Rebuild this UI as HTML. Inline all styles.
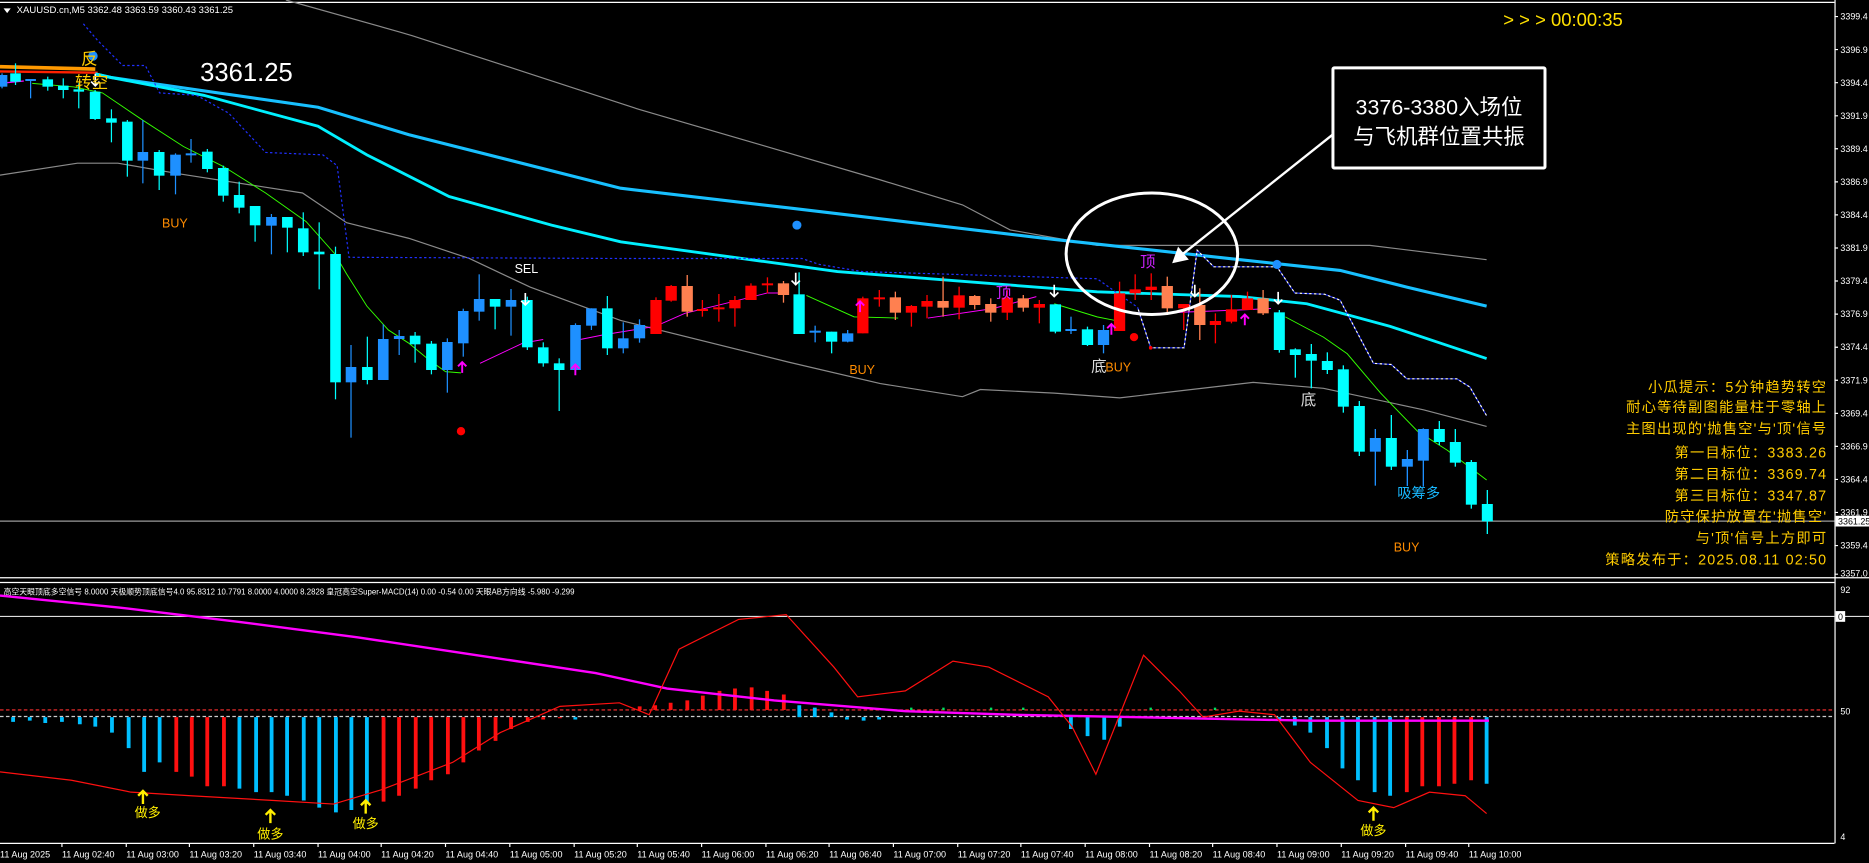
<!DOCTYPE html>
<html><head><meta charset="utf-8">
<style>
html,body{margin:0;padding:0;background:#000;width:1869px;height:863px;overflow:hidden}
svg{display:block;font-family:"Liberation Sans","Noto Sans CJK SC","WenQuanYi Zen Hei",sans-serif}
</style></head><body>
<svg width="1869" height="863" viewBox="0 0 1869 863" xmlns="http://www.w3.org/2000/svg">
<rect width="1869" height="863" fill="#000"/>

<!-- ========== display-coordinate group ========== -->
<g transform="scale(1.1912)">
  <!-- frame -->
  <line x1="0" y1="2" x2="1540" y2="2" stroke="#fff" stroke-width="1"/>
  <line x1="1540.5" y1="0" x2="1540.5" y2="708" stroke="#fff" stroke-width="1"/>
  <line x1="0" y1="485" x2="1569" y2="485" stroke="#fff" stroke-width="1"/>
  <line x1="0" y1="489" x2="1540" y2="489" stroke="#fff" stroke-width="1"/>
  <line x1="0" y1="708" x2="1540" y2="708" stroke="#fff" stroke-width="1"/>

  <!-- bands -->
  <polyline fill="none" stroke="#8a8a8a" stroke-width="1" points="240,0 336,27 346,30 442,61 537,92 640,122 739,151 808,172 848,193 921,206 1091,206 1150,206 1248,218"/>
  <polyline fill="none" stroke="#8a8a8a" stroke-width="1" points="0,147 65,137 99,137 151,146 254,162 291,187 343,200 394,217 445,241 521,269 662,304 739,322 808,333 823,327 885,330 940,334 1052,321 1111,326 1195,344 1248,358"/>

  <!-- left orange/red -->
  <line x1="0" y1="56" x2="80" y2="58" stroke="#ff9900" stroke-width="3"/>
  <line x1="0" y1="60" x2="82" y2="61" stroke="#ff2000" stroke-width="2"/>

  <!-- cyan thick -->
  <polyline fill="none" stroke="#18c0ff" stroke-width="2.6" points="80,62 93,65 267,90 343,113 521,158 666,175 885,201 1041,218 1125,227 1181,241 1248,257"/>
  <polyline fill="none" stroke="#00f0ff" stroke-width="2.4" points="80,62 93,65 171,80 267,106 308,130 377,165 463,189 521,203 703,228 921,245 1041,249 1097,255 1167,274 1248,301"/>

  <!-- stepped dotted line -->
  <polyline fill="none" stroke="#2030ff" stroke-width="1" stroke-dasharray="2,2" points="70,20 82,34 103,55 122,55 134,78 165,80 192,95 223,128 271,130 283,139 293,216 521,217 673,217 688,222 724,228 921,234 955,258 966,292 994,292 1005,210 1019,224 1072,224 1087,246 1112,247 1125,252 1153,305 1168,306 1181,318 1223,318 1234,325 1248,349"/>
  <polyline fill="none" stroke="#fff" stroke-width="1" stroke-dasharray="2,2" stroke-dashoffset="2" points="955,258 966,292 994,292 1005,210 1019,224 1072,224 1087,246 1112,247 1125,252 1153,305 1168,306 1181,318 1223,318 1234,325 1248,349"/>

  <!-- green / magenta MAs -->
  <polyline fill="none" stroke="#ff00ff" stroke-width="1" points="0,70 20,68"/>
  <polyline fill="none" stroke="#33ff00" stroke-width="0.8" points="27,70 62,73 86,78 120,101 154,123 188,140 223,162 257,186 281,213 291,230 308,257 326,277 343,288 360,302 374,312 387,313"/>
  <polyline fill="none" stroke="#ff00ff" stroke-width="0.8" points="403,305 439,288 456,285"/>
  <polyline fill="none" stroke="#ff00ff" stroke-width="0.8" points="487,285 507,281 550,274 575,263 612,254 644,246 655,246"/>
  <polyline fill="none" stroke="#33ff00" stroke-width="0.8" points="677,248 717,266 754,267"/>
  <polyline fill="none" stroke="#ff00ff" stroke-width="0.8" points="779,267 834,259 870,249"/>
  <polyline fill="none" stroke="#33ff00" stroke-width="0.8" points="885,255 921,266 936,269"/>
  <polyline fill="none" stroke="#ff00ff" stroke-width="0.8" points="954,264 994,262 1045,260 1067,259"/>
  <polyline fill="none" stroke="#33ff00" stroke-width="0.8" points="1079,266 1111,283 1131,297 1159,330 1190,362 1215,378 1248,403"/>

  <!-- current price line -->
  <line x1="0" y1="437.5" x2="1540" y2="437.5" stroke="#9a9a9a" stroke-width="1"/>
</g>

<!-- ========== candles (zoom coordinate groups) ========== -->
<g transform="translate(0,40) scale(0.40816,0.33333)">
 <g fill="#1e90ff">
  <rect x="3.5" y="100" width="3" height="45"/><rect x="-8" y="105" width="26" height="35"/>
  <rect x="73.5" y="118" width="3" height="57"/><rect x="62" y="117" width="26" height="6"/>
  <rect x="348.5" y="240" width="3" height="190"/><rect x="337" y="336" width="26" height="26"/>
  <rect x="428.5" y="340" width="3" height="123"/><rect x="417" y="344" width="26" height="63"/>
  <rect x="466.5" y="297" width="3" height="71"/><rect x="455" y="340" width="26" height="6"/>
  <rect x="663.5" y="522" width="3" height="121"/><rect x="652" y="531" width="26" height="26"/>
  <rect x="858.5" y="915" width="3" height="278"/><rect x="847" y="981" width="26" height="46"/>
  <rect x="937.5" y="853" width="3" height="167"/><rect x="926" y="897" width="26" height="123"/>
  <rect x="976.5" y="870" width="3" height="75"/><rect x="965" y="888" width="26" height="9"/>
  <rect x="1094.5" y="895" width="3" height="163"/><rect x="1083" y="906" width="26" height="84"/>
  <rect x="1133.5" y="806" width="3" height="144"/><rect x="1122" y="813" width="26" height="97"/>
  <rect x="1172.5" y="703" width="3" height="139"/><rect x="1161" y="777" width="26" height="38"/>
  <rect x="1250.5" y="747" width="3" height="140"/><rect x="1239" y="780" width="26" height="20"/>
  <rect x="1408.5" y="850" width="3" height="145"/><rect x="1397" y="855" width="26" height="135"/>
  <rect x="1447.5" y="805" width="3" height="65"/><rect x="1436" y="805" width="26" height="52"/>
  <rect x="1525.5" y="847" width="3" height="93"/><rect x="1514" y="895" width="26" height="30"/>
 </g>
 <g fill="#00ffff">
  <rect x="36.5" y="70" width="3" height="65"/><rect x="25" y="100" width="26" height="25"/>
  <rect x="115.5" y="110" width="3" height="42"/><rect x="104" y="118" width="26" height="22"/>
  <rect x="153.5" y="115" width="3" height="60"/><rect x="142" y="137" width="26" height="13"/>
  <rect x="191.5" y="130" width="3" height="75"/><rect x="180" y="148" width="26" height="7"/>
  <rect x="231.5" y="150" width="3" height="90"/><rect x="220" y="155" width="26" height="82"/>
  <rect x="271.5" y="208" width="3" height="99"/><rect x="260" y="235" width="26" height="13"/>
  <rect x="310.5" y="240" width="3" height="170"/><rect x="299" y="245" width="26" height="117"/>
  <rect x="388.5" y="330" width="3" height="120"/><rect x="377" y="336" width="26" height="71"/>
  <rect x="506.5" y="327" width="3" height="70"/><rect x="495" y="335" width="26" height="52"/>
  <rect x="545.5" y="377" width="3" height="108"/><rect x="534" y="384" width="26" height="83"/>
  <rect x="584.5" y="425" width="3" height="95"/><rect x="573" y="465" width="26" height="38"/>
  <rect x="623.5" y="498" width="3" height="107"/><rect x="612" y="498" width="26" height="58"/>
  <rect x="702.5" y="531" width="3" height="106"/><rect x="691" y="531" width="26" height="32"/>
  <rect x="741.5" y="517" width="3" height="131"/><rect x="730" y="565" width="26" height="72"/>
  <rect x="780.5" y="547" width="3" height="201"/><rect x="769" y="635" width="26" height="8"/>
  <rect x="820.5" y="620" width="3" height="458"/><rect x="809" y="642" width="26" height="385"/>
  <rect x="898.5" y="890" width="3" height="143"/><rect x="887" y="981" width="26" height="39"/>
  <rect x="1015.5" y="876" width="3" height="92"/><rect x="1004" y="887" width="26" height="26"/>
  <rect x="1055.5" y="903" width="3" height="100"/><rect x="1044" y="911" width="26" height="79"/>
  <rect x="1211.5" y="777" width="3" height="91"/><rect x="1200" y="777" width="26" height="23"/>
  <rect x="1290.5" y="770" width="3" height="160"/><rect x="1279" y="780" width="26" height="142"/>
  <rect x="1329.5" y="907" width="3" height="73"/><rect x="1318" y="922" width="26" height="48"/>
  <rect x="1368.5" y="955" width="3" height="158"/><rect x="1357" y="970" width="26" height="20"/>
  <rect x="1486.5" y="768" width="3" height="177"/><rect x="1475" y="805" width="26" height="120"/>
 </g>
</g>

<g transform="translate(620,180) scale(0.43365,0.33333)">
 <g fill="#1e90ff">
  <rect x="43.5" y="418" width="3" height="70"/><rect x="32" y="435" width="26" height="40"/>
  <rect x="448.5" y="437" width="3" height="50"/><rect x="437" y="452" width="26" height="6"/>
  <rect x="523.5" y="450" width="3" height="37"/><rect x="512" y="460" width="26" height="25"/>
  <rect x="1038.5" y="410" width="3" height="52"/><rect x="1027" y="447" width="26" height="6"/>
  <rect x="1113.5" y="435" width="3" height="85"/><rect x="1102" y="450" width="26" height="45"/>
 </g>
 <g fill="#00ffff">
  <rect x="411.5" y="277" width="3" height="185"/><rect x="400" y="343" width="26" height="119"/>
  <rect x="486.5" y="455" width="3" height="65"/><rect x="475" y="455" width="26" height="30"/>
  <rect x="1002.5" y="373" width="3" height="87"/><rect x="991" y="373" width="26" height="82"/>
  <rect x="1076.5" y="440" width="3" height="58"/><rect x="1065" y="448" width="26" height="47"/>
 </g>
 <g fill="#ff0000">
  <rect x="81.5" y="352" width="3" height="110"/><rect x="70" y="360" width="26" height="102"/>
  <rect x="116.5" y="315" width="3" height="50"/><rect x="105" y="318" width="26" height="44"/>
  <rect x="188.5" y="360" width="3" height="50"/><rect x="177" y="387" width="26" height="6"/>
  <rect x="226.5" y="342" width="3" height="83"/><rect x="215" y="382" width="26" height="6"/>
  <rect x="263.5" y="348" width="3" height="92"/><rect x="252" y="360" width="26" height="25"/>
  <rect x="300.5" y="310" width="3" height="50"/><rect x="289" y="317" width="26" height="43"/>
  <rect x="338.5" y="292" width="3" height="48"/><rect x="327" y="310" width="26" height="6"/>
  <rect x="558.5" y="350" width="3" height="110"/><rect x="547" y="355" width="26" height="105"/>
  <rect x="596.5" y="330" width="3" height="50"/><rect x="585" y="352" width="26" height="6"/>
  <rect x="670.5" y="375" width="3" height="65"/><rect x="659" y="378" width="26" height="20"/>
  <rect x="706.5" y="345" width="3" height="70"/><rect x="695" y="363" width="26" height="17"/>
  <rect x="780.5" y="320" width="3" height="98"/><rect x="769" y="346" width="26" height="37"/>
  <rect x="891.5" y="330" width="3" height="90"/><rect x="880" y="353" width="26" height="45"/>
  <rect x="965.5" y="360" width="3" height="70"/><rect x="954" y="372" width="26" height="11"/>
  <rect x="1150.5" y="305" width="3" height="148"/><rect x="1139" y="340" width="26" height="113"/>
  <rect x="1186.5" y="283" width="3" height="77"/><rect x="1175" y="328" width="26" height="12"/>
  <rect x="1223.5" y="280" width="3" height="80"/><rect x="1212" y="320" width="26" height="10"/>
  <rect x="1298.5" y="372" width="3" height="78"/><rect x="1287" y="372" width="26" height="13"/>
  <rect x="1371.5" y="400" width="3" height="90"/><rect x="1360" y="423" width="26" height="12"/>
  <rect x="1408.5" y="345" width="3" height="85"/><rect x="1397" y="388" width="26" height="37"/>
  <rect x="1445.5" y="335" width="3" height="55"/><rect x="1434" y="355" width="26" height="35"/>
 </g>
 <g fill="#ff8050">
  <rect x="153.5" y="285" width="3" height="125"/><rect x="142" y="318" width="26" height="77"/>
  <rect x="375.5" y="303" width="3" height="65"/><rect x="364" y="310" width="26" height="35"/>
  <rect x="633.5" y="335" width="3" height="85"/><rect x="622" y="352" width="26" height="46"/>
  <rect x="743.5" y="290" width="3" height="120"/><rect x="732" y="363" width="26" height="20"/>
  <rect x="816.5" y="345" width="3" height="43"/><rect x="805" y="348" width="26" height="27"/>
  <rect x="853.5" y="355" width="3" height="70"/><rect x="842" y="372" width="26" height="26"/>
  <rect x="928.5" y="345" width="3" height="50"/><rect x="917" y="355" width="26" height="28"/>
  <rect x="1260.5" y="290" width="3" height="115"/><rect x="1249" y="318" width="26" height="67"/>
  <rect x="1335.5" y="325" width="3" height="155"/><rect x="1324" y="375" width="26" height="60"/>
  <rect x="1481.5" y="330" width="3" height="75"/><rect x="1470" y="355" width="26" height="45"/>
 </g>
</g>

<g transform="translate(1240,180) scale(0.33333)">
 <g fill="#00ffff">
  <rect x="116" y="390" width="4" height="128"/><rect x="101.5" y="397" width="33" height="113"/>
  <rect x="164" y="505" width="4" height="88"/><rect x="149.5" y="508" width="33" height="17"/>
  <rect x="212" y="492" width="4" height="133"/><rect x="197.5" y="522" width="33" height="20"/>
  <rect x="260" y="517" width="4" height="65"/><rect x="245.5" y="543" width="33" height="27"/>
  <rect x="308" y="556" width="4" height="142"/><rect x="293.5" y="568" width="33" height="112"/>
  <rect x="356" y="663" width="4" height="165"/><rect x="341.5" y="678" width="33" height="137"/>
  <rect x="452" y="705" width="4" height="165"/><rect x="437.5" y="774" width="33" height="86"/>
  <rect x="596" y="723" width="4" height="72"/><rect x="581.5" y="747" width="33" height="39"/>
  <rect x="644" y="747" width="4" height="113"/><rect x="629.5" y="786" width="33" height="62"/>
  <rect x="692" y="840" width="4" height="146"/><rect x="677.5" y="846" width="33" height="128"/>
  <rect x="740" y="930" width="4" height="132"/><rect x="725.5" y="972" width="33" height="52"/>
 </g>
 <g fill="#1e90ff">
  <rect x="404" y="747" width="4" height="170"/><rect x="389.5" y="774" width="33" height="41"/>
  <rect x="500" y="810" width="4" height="108"/><rect x="485.5" y="837" width="33" height="23"/>
  <rect x="548" y="745" width="4" height="175"/><rect x="533.5" y="747" width="33" height="95"/>
 </g>
</g>

<!-- ========== overlays in display coords ========== -->
<g transform="scale(1.1912)">
  <!-- dots -->
  <circle cx="78" cy="47" r="4" fill="#1e90ff"/>
  <circle cx="669" cy="189" r="3.8" fill="#1e90ff"/>
  <circle cx="1072" cy="222" r="3.8" fill="#1e90ff"/>
  <circle cx="387" cy="362" r="3.5" fill="#ff0000"/>
  <circle cx="952" cy="283" r="3.5" fill="#ff0000"/>
  <circle cx="966" cy="292" r="1.5" fill="#ff0000"/>

  <!-- white down arrows -->
  <g stroke="#fff" stroke-width="1.4" fill="none">
    <path d="M441,246 V256 M437.5,252.5 L441,256 L444.5,252.5"/>
    <path d="M668,229 V239 M664.5,235.5 L668,239 L671.5,235.5"/>
    <path d="M885,239 V249 M881.5,245.5 L885,249 L888.5,245.5"/>
    <path d="M1003,239 V249 M999.5,245.5 L1003,249 L1006.5,245.5"/>
    <path d="M1073,245 V255 M1069.5,251.5 L1073,255 L1076.5,251.5"/>
    <path d="M80,62 V72 M76.5,68.5 L80,72 L83.5,68.5"/>
  </g>
  <!-- magenta up arrows -->
  <g stroke="#ff00ff" stroke-width="1.6" fill="none">
    <path d="M388,313 V304 M384.5,307.5 L388,304 L391.5,307.5"/>
    <path d="M483,315 V306 M479.5,309.5 L483,306 L486.5,309.5"/>
    <path d="M722,262 V253 M718.5,256.5 L722,253 L725.5,256.5"/>
    <path d="M933,281 V272 M929.5,275.5 L933,272 L936.5,275.5"/>
    <path d="M1045,273 V264 M1041.5,267.5 L1045,264 L1048.5,267.5"/>
  </g>

  <!-- labels on chart -->
  <g font-size="10.5" fill="#ff8c00">
    <text x="136" y="191">BUY</text>
    <text x="713" y="314">BUY</text>
    <text x="928" y="312">BUY</text>
    <text x="1170" y="463">BUY</text>
  </g>
  <text x="432" y="229" font-size="10.5" fill="#fff">SEL</text>
  <text x="957" y="224" font-size="13" fill="#cc22ff">顶</text>
  <text x="836" y="250" font-size="13" fill="#cc22ff">顶</text>
  <text x="916" y="312" font-size="13" fill="#ddd">底</text>
  <text x="1092" y="340" font-size="13" fill="#ddd">底</text>
  <text x="1173" y="418" font-size="12" fill="#18b8ff">吸筹多</text>
  <text x="68" y="54" font-size="14" fill="#ffcc00">反</text>
  <text x="63" y="74" font-size="14" fill="#ffcc00">转空</text>

  <!-- header -->
  <path d="M3,7 L9,7 L6,11 Z" fill="#fff"/>
  <text x="14" y="11" font-size="8" fill="#fff">XAUUSD.cn,M5  3362.48 3363.59 3360.43 3361.25</text>
  <text x="168" y="68" font-size="21.5" fill="#fff">3361.25</text>
  <text x="1262" y="22" font-size="15.5" fill="#ffe000">&gt; &gt; &gt; 00:00:35</text>

  <!-- circle + arrow + box -->
  <ellipse cx="967" cy="213" rx="72" ry="51" fill="none" stroke="#fff" stroke-width="2.5"/>
  <line x1="1120" y1="112" x2="992" y2="214" stroke="#fff" stroke-width="2"/>
  <path d="M984,221 L989,207 L998,218 Z" fill="#fff"/>
  <rect x="1119" y="57" width="178" height="84" fill="#000" stroke="#fff" stroke-width="2.5" rx="1"/>
  <text x="1208" y="96" font-size="18" fill="#fff" text-anchor="middle">3376-3380入场位</text>
  <text x="1208" y="121" font-size="18" fill="#fff" text-anchor="middle">与飞机群位置共振</text>

  <!-- right info text -->
  <g font-size="12" fill="#ffcc00" text-anchor="end" letter-spacing="1">
    <text x="1534" y="329">小瓜提示：5分钟趋势转空</text>
    <text x="1534" y="346">耐心等待副图能量柱于零轴上</text>
    <text x="1534" y="364">主图出现的'抛售空'与'顶'信号</text>
    <text x="1534" y="384">第一目标位：3383.26</text>
    <text x="1534" y="402">第二目标位：3369.74</text>
    <text x="1534" y="420">第三目标位：3347.87</text>
    <text x="1534" y="438">防守保护放置在'抛售空'</text>
    <text x="1534" y="456">与'顶'信号上方即可</text>
    <text x="1534" y="474">策略发布于：2025.08.11 02:50</text>
  </g>

  <!-- right price axis -->
  <g font-size="7.5" fill="#fff">
    <text x="1545" y="16.5">3399.4</text><text x="1545" y="44.3">3396.9</text><text x="1545" y="72">3394.4</text>
    <text x="1545" y="99.8">3391.9</text><text x="1545" y="127.5">3389.4</text><text x="1545" y="155.3">3386.9</text>
    <text x="1545" y="183">3384.4</text><text x="1545" y="210.8">3381.9</text><text x="1545" y="238.6">3379.4</text>
    <text x="1545" y="266.3">3376.9</text><text x="1545" y="294">3374.4</text><text x="1545" y="321.8">3371.9</text>
    <text x="1545" y="349.6">3369.4</text><text x="1545" y="377.3">3366.9</text><text x="1545" y="405">3364.4</text>
    <text x="1545" y="432.8">3361.9</text><text x="1545" y="460.6">3359.4</text><text x="1545" y="484">3357.0</text>
  </g>
  <g stroke="#fff" stroke-width="1">
    <path d="M1540,13.9h3M1540,41.6h3M1540,69.4h3M1540,97.2h3M1540,124.9h3M1540,152.7h3M1540,180.4h3M1540,208.2h3M1540,235.9h3M1540,263.7h3M1540,291.5h3M1540,319.2h3M1540,347h3M1540,374.7h3M1540,402.5h3M1540,430.2h3M1540,458h3M1540,482h3"/>
  </g>
  <rect x="1541" y="433" width="28" height="9" fill="#fff"/>
  <text x="1543" y="440.5" font-size="7.5" fill="#000">3361.25</text>

  <!-- ===== sub pane ===== -->
  <line x1="0" y1="517.5" x2="1569" y2="517.5" stroke="#ddd" stroke-width="1"/>
  <text x="3" y="499" font-size="6.6" fill="#fff">高空天眼顶底多空信号 8.0000  天极顺势顶底信号4.0 95.8312 10.7791 8.0000 4.0000 8.2828  皇冠高空Super-MACD(14) 0.00 -0.54 0.00  天眼AB方向线 -5.980 -9.299</text>
  <text x="1545" y="498" font-size="7.5" fill="#fff">92</text>
  <rect x="1541" y="513" width="8" height="9" fill="#fff"/>
  <text x="1543" y="520.5" font-size="7.5" fill="#000">0</text>
  <text x="1545" y="600" font-size="7.5" fill="#fff">50</text>
  <text x="1545" y="705" font-size="7.5" fill="#fff">4</text>
  <line x1="0" y1="596" x2="1540" y2="596" stroke="#ff3030" stroke-width="1" stroke-dasharray="3,2"/>
  <line x1="0" y1="601.5" x2="1540" y2="601.5" stroke="#ccc" stroke-width="1" stroke-dasharray="3,2"/>

  <!-- histogram -->
  <g stroke-width="3.2">
    <g stroke="#00bfff">
      <path d="M11,602V606M25,602V605M38,602V607M52,602V606M67,602V608M80,602V610M94,602V615M108,602V628M121,602V648M134,602V640M201,602V662M215,602V665M228,602V665M241,602V668M255,602V672M268,602V678M282,602V682M295,602V680M308,602V675M483,602V604M671,602V592M684,602V594M698,602V598M711,602V604M725,602V605M738,602V604M899,602V612M913,602V618M927,602V621M940,602V610M1074,602V605M1087,602V609M1100,602V615M1114,602V628M1127,602V645M1140,602V655M1154,602V665M1167,602V668M1248,602V658"/>
    </g>
    <g stroke="#ff1010">
      <path d="M148,602V648M161,602V652M174,602V660M188,602V660M322,602V673M335,602V668M349,602V662M362,602V655M376,602V650M389,602V640M402,602V630M416,602V622M429,602V612M443,602V606M456,602V604M470,602V603M537,596V593M550,596V592M563,596V590M577,596V588M590,596V584M604,596V580M617,596V578M631,596V577M644,596V580M658,596V583M1181,602V665M1194,602V660M1208,602V660M1221,602V658M1235,602V655"/>
    </g>
    <g stroke="#00e060" stroke-width="2">
      <path d="M765,596V594M792,596V594M832,596V594M859,596V594M966,596V594M1020,596V594"/>
    </g>
  </g>
  <polyline fill="none" stroke="#ff00ff" stroke-width="2" points="0,500 100,510 200,522 300,535 400,550 500,565 560,578 650,588 760,597 850,600 1000,603 1100,605 1250,605"/>
  <polyline fill="none" stroke="#ff1010" stroke-width="1" points="0,648 60,655 110,665 160,668 230,672 280,675 320,663 380,640 420,615 470,593 520,590 545,600 570,545 620,520 660,516 700,560 720,585 760,580 800,555 830,560 880,585 900,610 920,650 940,600 960,550 990,580 1010,602 1040,597 1070,600 1100,640 1140,672 1170,678 1200,665 1230,668 1248,683"/>

  <!-- 做多 markers -->
  <g fill="#ffee00" font-size="11">
    <text x="113" y="686">做多</text>
    <text x="216" y="704">做多</text>
    <text x="296" y="695">做多</text>
    <text x="1142" y="701">做多</text>
  </g>
  <g stroke="#ffee00" stroke-width="2" fill="none">
    <path d="M120,675V664M116,668L120,664L124,668"/>
    <path d="M227,691V680M223,684L227,680L231,684"/>
    <path d="M307,683V672M303,676L307,672L311,676"/>
    <path d="M1153,689V678M1149,682L1153,678L1157,682"/>
  </g>

  <!-- time axis -->
  <g stroke="#fff" stroke-width="1">
    <path d="M52,708v3M106,708v3M159,708v3M213,708v3M267,708v3M320,708v3M374,708v3M428,708v3M482,708v3M535,708v3M589,708v3M643,708v3M696,708v3M750,708v3M804,708v3M857,708v3M911,708v3M965,708v3M1018,708v3M1072,708v3M1126,708v3M1180,708v3M1233,708v3"/>
  </g>
  <g font-size="7.6" fill="#fff">
    <text x="0" y="720">11 Aug 2025</text>
    <text x="52" y="720">11 Aug 02:40</text><text x="106" y="720">11 Aug 03:00</text><text x="159" y="720">11 Aug 03:20</text>
    <text x="213" y="720">11 Aug 03:40</text><text x="267" y="720">11 Aug 04:00</text><text x="320" y="720">11 Aug 04:20</text>
    <text x="374" y="720">11 Aug 04:40</text><text x="428" y="720">11 Aug 05:00</text><text x="482" y="720">11 Aug 05:20</text>
    <text x="535" y="720">11 Aug 05:40</text><text x="589" y="720">11 Aug 06:00</text><text x="643" y="720">11 Aug 06:20</text>
    <text x="696" y="720">11 Aug 06:40</text><text x="750" y="720">11 Aug 07:00</text><text x="804" y="720">11 Aug 07:20</text>
    <text x="857" y="720">11 Aug 07:40</text><text x="911" y="720">11 Aug 08:00</text><text x="965" y="720">11 Aug 08:20</text>
    <text x="1018" y="720">11 Aug 08:40</text><text x="1072" y="720">11 Aug 09:00</text><text x="1126" y="720">11 Aug 09:20</text>
    <text x="1180" y="720">11 Aug 09:40</text><text x="1233" y="720">11 Aug 10:00</text>
  </g>
</g>
</svg>
</body></html>
